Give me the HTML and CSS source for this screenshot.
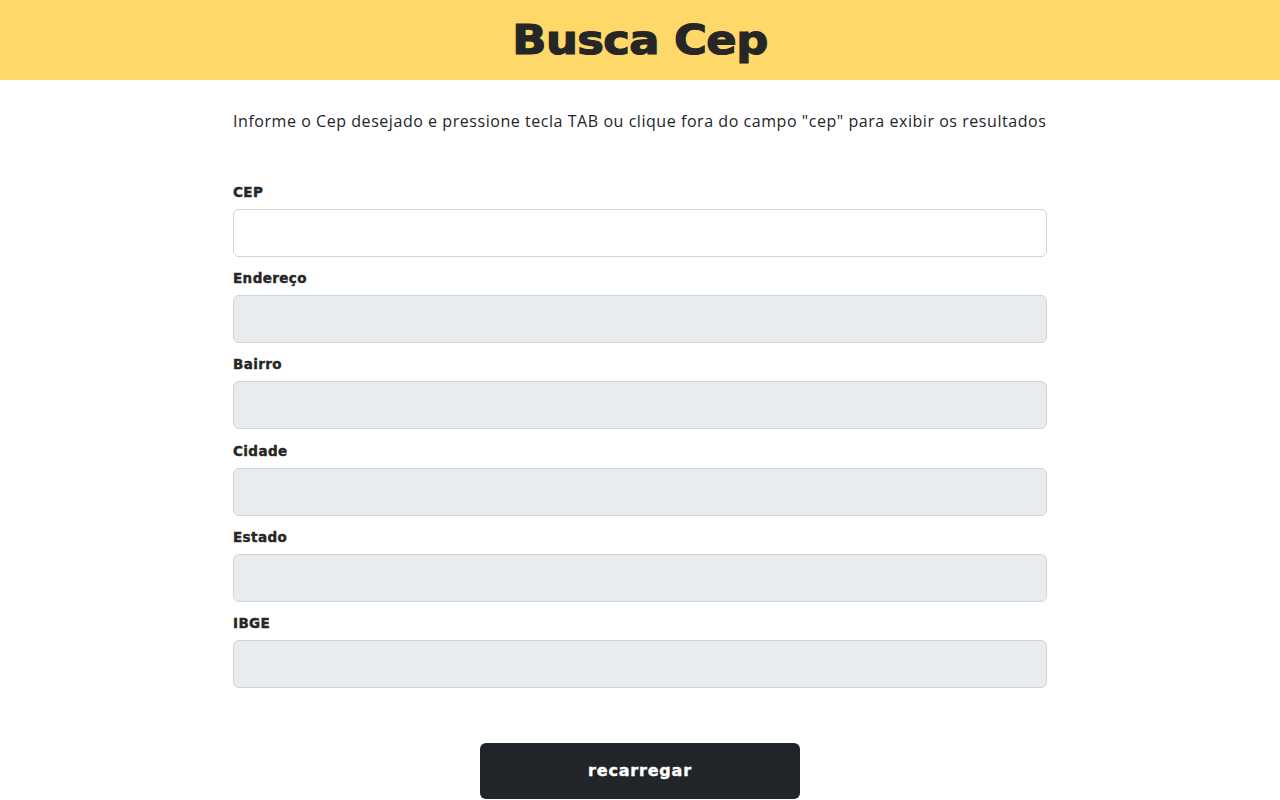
FILE: index.html
```html
<!DOCTYPE html>
<html lang="pt-BR">
<head>
<meta charset="utf-8">
<title>Busca Cep</title>
<link rel="stylesheet" href="styles.css">
</head>
<body>
<header class="topo">
  <h1 class="titulo">Busca Cep</h1>
</header>
<main class="conteudo">
  <p class="instrucao">Informe o Cep desejado e pressione tecla TAB ou clique fora do campo "cep" para exibir os resultados</p>
  <form class="formulario">
    <div class="campo">
      <label class="rotulo" for="cep">CEP</label>
      <input class="entrada" id="cep" type="text">
    </div>
    <div class="campo">
      <label class="rotulo" for="end">Endereço</label>
      <input class="entrada" id="end" type="text" disabled>
    </div>
    <div class="campo">
      <label class="rotulo" for="bairro">Bairro</label>
      <input class="entrada" id="bairro" type="text" disabled>
    </div>
    <div class="campo">
      <label class="rotulo" for="cidade">Cidade</label>
      <input class="entrada" id="cidade" type="text" disabled>
    </div>
    <div class="campo">
      <label class="rotulo" for="estado">Estado</label>
      <input class="entrada" id="estado" type="text" disabled>
    </div>
    <div class="campo">
      <label class="rotulo" for="ibge">IBGE</label>
      <input class="entrada" id="ibge" type="text" disabled>
    </div>
    <div class="acoes">
      <button class="botao" type="button">recarregar</button>
    </div>
  </form>
</main>
</body>
</html>
```
FILE: styles.css
```css
* { box-sizing: border-box; }
html, body { margin: 0; padding: 0; background: #fff; }
body {
  font-family: "Open Sans", "Noto Sans", sans-serif;
  color: #212529;
}
.topo {
  height: 80px;
  background: #ffd86a;
  display: flex;
  align-items: center;
  justify-content: center;
}
.titulo {
  margin: 0;
  font-family: "DejaVu Sans", sans-serif;
  font-weight: 700;
  font-size: 40px;
  letter-spacing: -0.5px;
  color: #262626;
  -webkit-text-stroke: 1.2px #262626;
  transform: scaleX(1.12);
}
.conteudo {
  width: 814px;
  margin: 0 auto;
  padding-top: 29px;
}
.instrucao {
  margin: 0;
  font-size: 16px;
  line-height: 24px;
  color: #212529;
  letter-spacing: 0.55px;
  white-space: nowrap;
}
.formulario {
  margin-top: 49px;
  display: flex;
  flex-direction: column;
}
.campo {
  display: flex;
  flex-direction: column;
}
.campo + .campo { margin-top: 11.2px; }
.rotulo {
  font-family: "DejaVu Sans", sans-serif;
  font-weight: 700;
  font-size: 13.5px;
  line-height: 20px;
  letter-spacing: 0.4px;
  color: #262626;
  -webkit-text-stroke: 0.4px #262626;
  margin-bottom: 7px;
}
.entrada {
  height: 48px;
  width: 100%;
  border: 1px solid #ced4da;
  border-radius: 6px;
  background: #fff;
  padding: 6px 12px;
  font-size: 16px;
}
.entrada:disabled { background: #e9ecef; }
.acoes {
  display: flex;
  justify-content: center;
  margin-top: 55px;
}
.botao {
  width: 320px;
  height: 56px;
  border: 0;
  border-radius: 6px;
  background: #212529;
  color: #fff;
  font-family: "DejaVu Sans", sans-serif;
  font-weight: 700;
  font-size: 16px;
  letter-spacing: 0.8px;
  -webkit-text-stroke: 0.4px #fff;
}
```
